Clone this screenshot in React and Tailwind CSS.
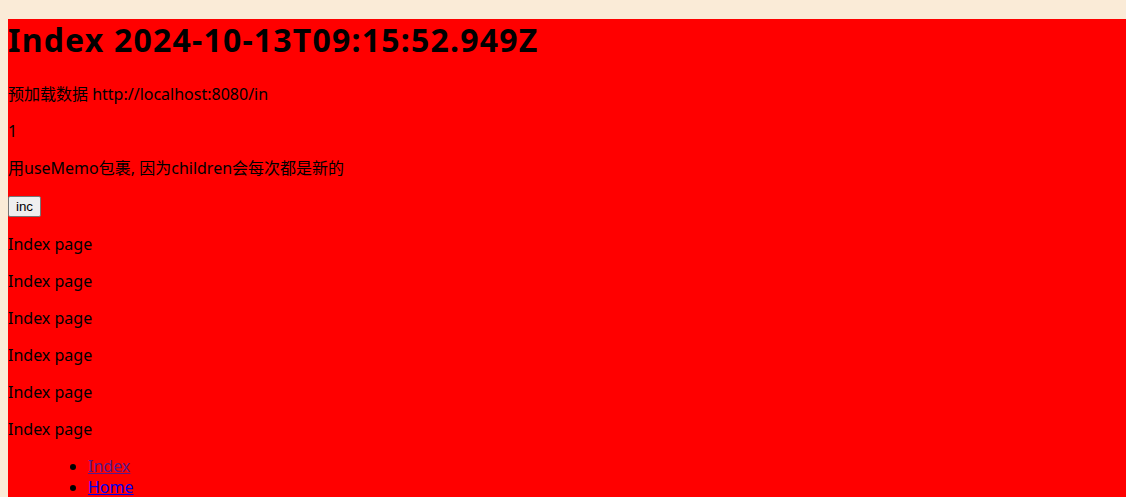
export default function App() {
    const pages = Array.from({ length: 6 });

    return (
        <div className="min-h-[497px] bg-[#faebd7] pt-[19px] pl-2 font-['Noto_Sans','Noto_Sans_CJK_SC',sans-serif] text-black">
            <div className="min-h-[478px] bg-[#ff0000] text-[16px] leading-[21px]">
                <h1 className="m-0 mb-[23px] text-[32px] leading-[42px] font-bold tracking-[1.2px]">Index 2024-10-13T09:15:52.949Z</h1>
                <p className="my-4">预加载数据 http://localhost:8080/in</p>
                <p className="my-4">1</p>
                <p className="my-4">用useMemo包裹, 因为children会每次都是新的</p>
                <div className="my-4 h-[23px] pt-[1px]">
                    <button className="block h-[21px] w-[33px] rounded-[2px] border border-[#767676] bg-[#efefef] font-['Liberation_Sans',sans-serif] text-[13.33px] leading-[19px] text-black">
                        inc
                    </button>
                </div>
                {pages.map((_, i) => (
                    <p key={i} className="my-4">Index page</p>
                ))}
                <ul className="mt-4 list-disc pl-20">
                    <li><a href="#" className="text-[#551a8b] underline">Index</a></li>
                    <li><a href="#" className="text-[#0000ee] underline">Home</a></li>
                </ul>
            </div>
        </div>
    );
}
